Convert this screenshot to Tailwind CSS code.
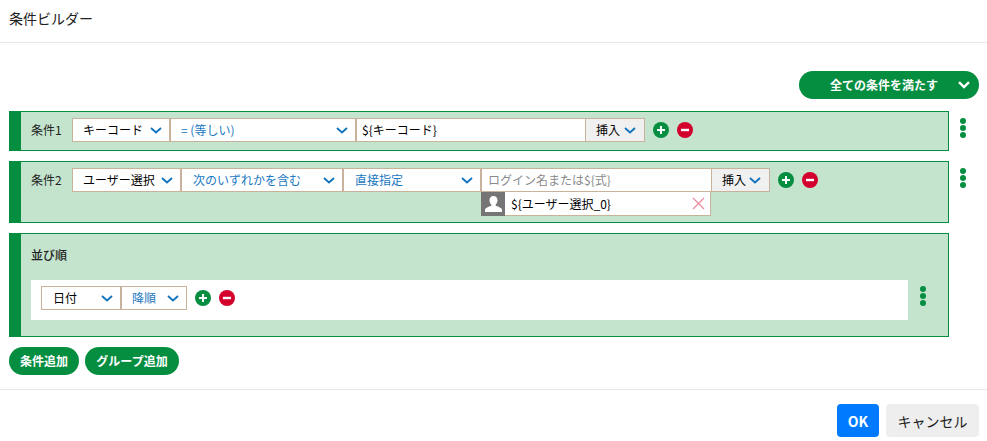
<!DOCTYPE html>
<html lang="ja">
<head>
    <meta charset="UTF-8">
    <title>条件ビルダー</title>
    <script src="https://cdn.jsdelivr.net/npm/@tailwindcss/browser@4"></script>
</head>
<body class="bg-white h-[441px] overflow-hidden font-['Noto_Sans_CJK_JP',sans-serif] text-xs text-[#212121]">
    <!-- Header -->
    <div class="h-[43px] border-b border-[#e8e8e8] pl-[9px] pt-[7px] text-sm leading-[22px]">条件ビルダー</div>

    <div class="h-[347px] pl-[9px] pr-2 pt-7 border-b border-[#e8e8e8]">
        <div class="flex justify-end h-7">
            <button class="w-[180px] h-7 rounded-full bg-[#058e3f] text-white font-bold flex items-center pl-[31px] pr-[9px] justify-between">
                <span>全ての条件を満たす</span>
                <svg width="12" height="8" viewBox="0 0 12 8" fill="none" stroke="white" stroke-width="2.4"><path d="M1 1.2 6 6l5-4.8"/></svg>
            </button>
        </div>

        <!-- 条件1 -->
        <div class="flex mt-3">
            <div class="w-[940px] h-10 bg-[#c4e4cd] border border-[#058e3f] border-l-[12px] flex pt-[6px] pl-[10px]">
                <span class="w-[41px] leading-6">条件1</span>
                <div class="w-[98px] h-6 bg-white border border-[#c8b29b] flex items-center justify-between pl-[10px] pr-[7px] text-black"><span>キーコード</span>
                    <svg width="12" height="7" viewBox="0 0 12 7" fill="none" stroke="#0e72bd" stroke-width="1.8"><path d="M1 1l5 4.5L11 1"/></svg></div>
                <div class="w-[186px] h-6 bg-white border border-[#c8b29b] flex items-center justify-between pl-[10px] pr-[7px] text-[#1a78c2]"><span>= (等しい)</span>
                    <svg width="12" height="7" viewBox="0 0 12 7" fill="none" stroke="#0e72bd" stroke-width="1.8"><path d="M1 1l5 4.5L11 1"/></svg></div>
                <div class="w-[229px] h-6 bg-white border-y border-l border-[#c8b29b] flex items-center pl-[5px] text-black">${キーコード}</div>
                <div class="w-[60px] h-6 bg-[#f0f0f0] border border-[#c8b29b] flex items-center justify-between pl-[10px] pr-[8px] text-black"><span>挿入</span>
                    <svg width="12" height="7" viewBox="0 0 12 7" fill="none" stroke="#0e72bd" stroke-width="1.8"><path d="M1 1l5 4.5L11 1"/></svg></div>
                <div class="flex gap-2 ml-2 mt-1">
                    <svg width="16" height="16" viewBox="0 0 16 16"><circle cx="8" cy="8" r="8" fill="#058e3f"/><path d="M8 4v8M4 8h8" stroke="white" stroke-width="2"/></svg>
                    <svg width="16" height="16" viewBox="0 0 16 16"><circle cx="8" cy="8" r="8" fill="#d3002d"/><path d="M4 8h8" stroke="white" stroke-width="2.4"/></svg>
                </div>
            </div>
            <div class="flex flex-col gap-[1px] ml-[11px] mt-[7px]">
                <span class="size-[6px] rounded-full bg-[#058e3f]"></span>
                <span class="size-[6px] rounded-full bg-[#058e3f]"></span>
                <span class="size-[6px] rounded-full bg-[#058e3f]"></span>
            </div>
        </div>

        <!-- 条件2 -->
        <div class="flex mt-[10px]">
            <div class="w-[940px] h-[62px] bg-[#c4e4cd] border border-[#058e3f] border-l-[12px] flex pt-[6px] pl-[10px]">
                <span class="w-[41px] leading-6">条件2</span>
                <div class="w-[109px] h-6 bg-white border border-[#c8b29b] flex items-center justify-between pl-[10px] pr-[7px] text-black"><span>ユーザー選択</span>
                    <svg width="12" height="7" viewBox="0 0 12 7" fill="none" stroke="#0e72bd" stroke-width="1.8"><path d="M1 1l5 4.5L11 1"/></svg></div>
                <div class="w-[162px] h-6 bg-white border border-[#c8b29b] flex items-center justify-between pl-[11px] pr-[7px] text-[#1a78c2]"><span>次のいずれかを含む</span>
                    <svg width="12" height="7" viewBox="0 0 12 7" fill="none" stroke="#0e72bd" stroke-width="1.8"><path d="M1 1l5 4.5L11 1"/></svg></div>
                <div class="w-[138px] h-6 bg-white border border-[#c8b29b] flex items-center justify-between pl-[11px] pr-[7px] text-[#1a78c2]"><span>直接指定</span>
                    <svg width="12" height="7" viewBox="0 0 12 7" fill="none" stroke="#0e72bd" stroke-width="1.8"><path d="M1 1l5 4.5L11 1"/></svg></div>
                <div class="w-[230px]">
                    <div class="h-6 bg-white border-y border-l border-[#c8b29b] flex items-center pl-[6px] text-[#8a8a8a]">ログイン名または${式}</div>
                    <div class="h-6 bg-white border-r border-b border-[#c8b29b] flex items-center">
                        <div class="size-6 bg-[#757575] flex items-center justify-center shrink-0">
                            <svg width="17" height="16" viewBox="0 0 17 16" fill="white"><path d="M8.5 0c2.500 0 4 1.800 4 4.300 0 1.800-.8 3.300-1.800 4.200v1.200c1.800.7 4.800 1.600 6.300 3.300V16H0v-3c1.500-1.700 4.500-2.600 6.300-3.300V8.500C5.300 7.600 4.500 6.100 4.500 4.300 4.500 1.800 6 0 8.500 0z"/></svg>
                        </div>
                        <span class="ml-[6px] text-black">${ユーザー選択_0}</span>
                        <svg class="ml-auto mr-[5px]" width="13" height="13" viewBox="0 0 13 13" stroke="#ea8a9c" stroke-width="1.2"><path d="M1 1l11 11M12 1L1 12"/></svg>
                    </div>
                </div>
                <div class="w-[59px] h-6 bg-[#f0f0f0] border border-[#c8b29b] flex items-center justify-between pl-[10px] pr-[8px] text-black"><span>挿入</span>
                    <svg width="12" height="7" viewBox="0 0 12 7" fill="none" stroke="#0e72bd" stroke-width="1.8"><path d="M1 1l5 4.5L11 1"/></svg></div>
                <div class="flex gap-2 ml-2 mt-1 h-4">
                    <svg width="16" height="16" viewBox="0 0 16 16"><circle cx="8" cy="8" r="8" fill="#058e3f"/><path d="M8 4v8M4 8h8" stroke="white" stroke-width="2"/></svg>
                    <svg width="16" height="16" viewBox="0 0 16 16"><circle cx="8" cy="8" r="8" fill="#d3002d"/><path d="M4 8h8" stroke="white" stroke-width="2.4"/></svg>
                </div>
            </div>
            <div class="flex flex-col gap-[1px] ml-[11px] mt-[7px]">
                <span class="size-[6px] rounded-full bg-[#058e3f]"></span>
                <span class="size-[6px] rounded-full bg-[#058e3f]"></span>
                <span class="size-[6px] rounded-full bg-[#058e3f]"></span>
            </div>
        </div>

        <!-- 並び順 -->
        <div class="w-[940px] h-[104px] mt-[10px] bg-[#c4e4cd] border border-[#058e3f] border-l-[12px] pl-[10px] pt-[12px]">
            <div class="h-[18px] leading-[18px] font-medium">並び順</div>
            <div class="flex mt-[16px]">
                <div class="w-[877px] h-10 bg-white flex pt-[6px] pl-[10px]">
                    <div class="w-20 h-6 border border-[#c8b29b] flex items-center justify-between pl-[11px] pr-[7px] text-black"><span>日付</span>
                        <svg width="12" height="7" viewBox="0 0 12 7" fill="none" stroke="#0e72bd" stroke-width="1.8"><path d="M1 1l5 4.5L11 1"/></svg></div>
                    <div class="w-[66px] h-6 border border-[#c8b29b] flex items-center justify-between pl-[10px] pr-[7px] text-[#1a78c2]"><span>降順</span>
                        <svg width="12" height="7" viewBox="0 0 12 7" fill="none" stroke="#0e72bd" stroke-width="1.8"><path d="M1 1l5 4.5L11 1"/></svg></div>
                    <div class="flex gap-2 ml-2 mt-1 h-4">
                        <svg width="16" height="16" viewBox="0 0 16 16"><circle cx="8" cy="8" r="8" fill="#058e3f"/><path d="M8 4v8M4 8h8" stroke="white" stroke-width="2"/></svg>
                        <svg width="16" height="16" viewBox="0 0 16 16"><circle cx="8" cy="8" r="8" fill="#d3002d"/><path d="M4 8h8" stroke="white" stroke-width="2.4"/></svg>
                    </div>
                </div>
                <div class="flex flex-col gap-[1px] ml-3 mt-[6px]">
                    <span class="size-[6px] rounded-full bg-[#058e3f]"></span>
                    <span class="size-[6px] rounded-full bg-[#058e3f]"></span>
                    <span class="size-[6px] rounded-full bg-[#058e3f]"></span>
                </div>
            </div>
        </div>

        <div class="flex gap-[6px] mt-[10px]">
            <button class="w-[70px] h-7 rounded-full bg-[#058e3f] text-white font-bold">条件追加</button>
            <button class="w-[94px] h-7 rounded-full bg-[#058e3f] text-white font-bold">グループ追加</button>
        </div>
    </div>

    <!-- Footer -->
    <div class="flex justify-end gap-[7px] pr-2 pt-[14px]">
        <button class="w-[42px] h-[33px] rounded bg-[#007bff] text-white text-sm font-bold">OK</button>
        <button class="w-[93px] h-[33px] rounded bg-[#eeeeee] text-sm text-[#212121]">キャンセル</button>
    </div>
</body>
</html>
